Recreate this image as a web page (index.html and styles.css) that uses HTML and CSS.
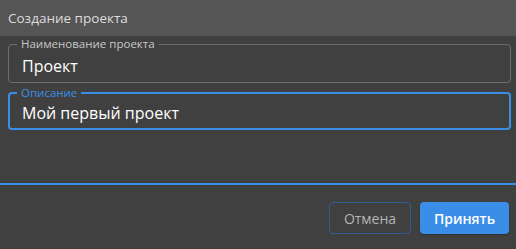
FILE: index.html
```html
<!DOCTYPE html>
<html lang="ru">
<head>
    <meta charset="UTF-8">
    <meta name="viewport" content="width=device-width, initial-scale=1.0">
    <title>Создание проекта</title>
    <link rel="stylesheet" href="styles.css">
</head>
<body>
    <div class="dialog">
        <div class="dialog-title">Создание проекта</div>

        <div class="dialog-body">
            <fieldset class="field">
                <legend class="field-label">Наименование проекта</legend>
                <input class="field-input" type="text" value="Проект">
            </fieldset>

            <fieldset class="field focused">
                <legend class="field-label">Описание</legend>
                <input class="field-input" type="text" value="Мой первый проект">
            </fieldset>
        </div>

        <div class="dialog-actions">
            <button class="btn btn-outline">Отмена</button>
            <button class="btn btn-primary">Принять</button>
        </div>
    </div>
</body>
</html>
```

FILE: styles.css
```css
* {
    margin: 0;
    padding: 0;
    box-sizing: border-box;
}

body {
    font-family: 'Open Sans', 'Noto Sans', sans-serif;
    background: #404040;
    height: 100vh;
    overflow: hidden;
}

.dialog {
    height: 100vh;
    display: flex;
    flex-direction: column;
}

.dialog-title {
    height: 36px;
    line-height: 36px;
    padding: 0 8px;
    background: #555555;
    color: #dcdcdc;
    font-size: 13.5px;
}

.dialog-body {
    flex: 1;
    padding: 1px 5px 0 8px;
    border-bottom: 2px solid #3a8ee8;
}

.field {
    border: 1px solid #6e6e6e;
    border-radius: 4px;
    padding: 3px 12px 4px 13px;
    margin-bottom: 3px;
}

.field-label {
    margin-left: -5px;
    padding: 0 4px;
    font-size: 11.5px;
    line-height: 14px;
    color: #c8c8c8;
}

.field-input {
    display: block;
    width: 100%;
    height: 24px;
    background: transparent;
    border: none;
    outline: none;
    color: #ffffff;
    font-family: inherit;
    font-size: 16px;
    font-weight: 500;
}

.field.focused {
    border: 2px solid #3a8ee8;
    padding: 1px 11px 3px 12px;
}

.field.focused .field-label {
    color: #3a8ee8;
}

.dialog-actions {
    display: flex;
    justify-content: flex-end;
    gap: 9px;
    padding: 17px 7px 15px;
}

.btn {
    height: 32px;
    border-radius: 4px;
    font-family: inherit;
    font-size: 14px;
    cursor: pointer;
}

.btn-outline {
    width: 82px;
    background: transparent;
    border: 1px solid #2d5d91;
    color: #b4b4b4;
}

.btn-primary {
    width: 89px;
    background: #3a8ee8;
    border: none;
    color: #ffffff;
    font-weight: 600;
    box-shadow: 0 1px 2px rgba(0, 0, 0, 0.3);
}
```
